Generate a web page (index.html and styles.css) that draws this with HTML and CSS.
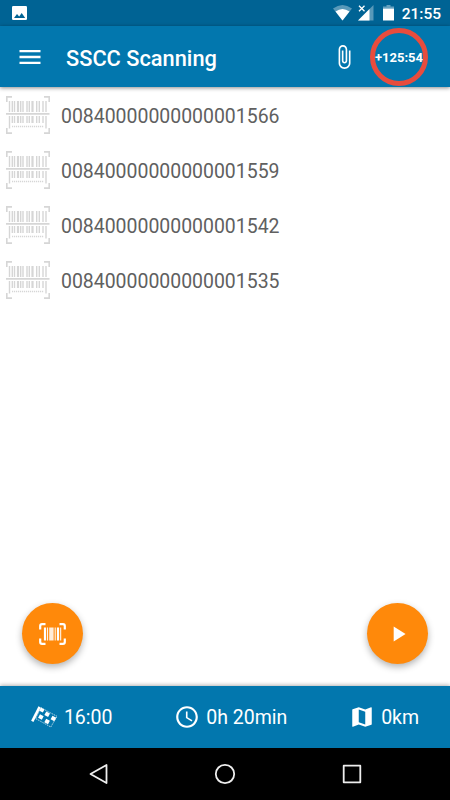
FILE: index.html
```html
<!DOCTYPE html>
<html lang="en">

<head>
    <meta charset="UTF-8">
    <meta name="viewport" content="width=device-width, initial-scale=1.0">
    <title>SSCC Scanning</title>
    <link rel="stylesheet" href="styles.css">
</head>

<body>
    <svg class="defs" width="0" height="0">
        <symbol id="barcode" viewBox="0 0 44 38">
            <path d="M.8 6V.9H6M38 .9h5.200V6M.8 32v5.100H6M38 37.100h5.200V32" fill="none" stroke="#d6d6d6" stroke-width="1.600" />
            <path d="M0 17.900h43.500" stroke="#d6d6d6" stroke-width="1.700" />
            <path d="M3.500 5v11M3.500 20v12.500M40 5v11M40 20v12.500M6.300 5v11M6.300 20v7M8.500 5v11M8.500 20v7M14.700 5v11M14.700 20v7M17 5v11M17 20v7M21 5v11M21 20v7M23.300 5v11M23.300 20v7M30.700 5v11M30.700 20v7M33.300 5v11M33.300 20v7M37 5v11M37 20v7" stroke="#d6d6d6" stroke-width="1.400" />
            <path d="M12 5v11M12 20v7M26.500 5v11M26.500 20v7" stroke="#d6d6d6" stroke-width="2.200" />
            <path d="M6 30.500h32" stroke="#d6d6d6" stroke-width="1.500" stroke-dasharray="1.200 .8" />
        </symbol>
    </svg>

    <div class="page-wrapper">
        <div class="status-bar">
            <svg class="picture" width="15" height="14" viewBox="0 0 15 14">
                <rect width="15" height="14" rx="1.300" fill="#fff" />
                <path d="M2 12l3-4 2.200 2.400L9.700 7l3.500 5z" fill="#006394" />
            </svg>
            <div class="status-right">
                <svg class="wifi" width="19" height="16" viewBox="0 0 19 16">
                    <path d="M0 3.500Q9.500-3.500 19 3.500L9.500 15.500z" fill="#fff" opacity=".35" />
                    <path d="M2.500 6.500Q9.500 1.500 16.500 6.500L9.500 15.500z" fill="#fff" />
                </svg>
                <svg class="signal" width="16" height="16" viewBox="0 0 16 16">
                    <path d="M15.500 0v15.500H0z" fill="#fff" opacity=".35" />
                    <path d="M11.500 4v11.500H0z" fill="#fff" />
                    <path d="M0 0h7.500v7L4 9.500 0 7z" fill="#006394" />
                    <path d="M1 .8l5.500 5.500M6.500 .8L1 6.300" stroke="#fff" stroke-width="1.300" />
                </svg>
                <svg class="battery" width="11" height="16" viewBox="0 0 11 16">
                    <path d="M3.500 0h4v1.500H11v2H0v-2h3.500z" fill="#fff" opacity=".4" />
                    <path d="M0 3.500h11v12H0z" fill="#fff" />
                </svg>
                <span class="clock">21:55</span>
            </div>
        </div>

        <div class="app-bar">
            <svg class="menu" width="28" height="28" viewBox="0 0 24 24">
                <path d="M3 18h18v-2H3v2zm0-5h18v-2H3v2zm0-7v2h18V6H3z" fill="#fff" />
            </svg>
            <div class="title">SSCC Scanning</div>
            <svg class="attach" width="26" height="26" viewBox="0 0 24 24">
                <path d="M16.500 6v11.500c0 2.210-1.790 4-4 4s-4-1.790-4-4V5c0-1.380 1.120-2.500 2.500-2.500s2.500 1.120 2.500 2.500v10.500c0 .55-.45 1-1 1s-1-.45-1-1V6H10v9.500c0 1.380 1.120 2.500 2.500 2.500s2.500-1.120 2.500-2.500V5c0-2.210-1.790-4-4-4S7 2.790 7 5v12.500c0 3.040 2.460 5.500 5.500 5.500s5.500-2.460 5.500-5.500V6h-1.500z" fill="#fff" />
            </svg>
            <div class="timer">+125:54</div>
        </div>

        <div class="content">
            <div class="row"><svg width="44" height="38"><use href="#barcode" /></svg><span>00840000000000001566</span></div>
            <div class="row"><svg width="44" height="38"><use href="#barcode" /></svg><span>00840000000000001559</span></div>
            <div class="row"><svg width="44" height="38"><use href="#barcode" /></svg><span>00840000000000001542</span></div>
            <div class="row"><svg width="44" height="38"><use href="#barcode" /></svg><span>00840000000000001535</span></div>

            <div class="actions">
                <div class="fab">
                    <svg width="27" height="22" viewBox="0 0 27 22">
                        <path d="M1.200 6.500V3q0-1.800 1.800-1.800h3.500M20.500 1.200H24q1.800 0 1.800 1.800v3.500M1.200 15.500V19q0 1.800 1.800 1.800h3.500M20.500 20.800H24q1.800 0 1.800-1.800v-3.500" fill="none" stroke="#fff" stroke-width="2.200" />
                        <path d="M6 4.500v13M19 4.500v13" stroke="#fff" stroke-width="2.200" />
                        <path d="M8.600 4.500v13M16.200 4.500v13M21.700 4.500v13" stroke="#fff" stroke-width="1" />
                        <path d="M12.400 4.500v13" stroke="#fff" stroke-width="4.400" opacity=".85" />
                    </svg>
                </div>
                <div class="fab">
                    <svg width="26" height="26" viewBox="0 0 24 24">
                        <path d="M8 5v14l11-7z" fill="#fff" />
                    </svg>
                </div>
            </div>
        </div>

        <div class="bottom-bar">
            <div class="info">
                <svg width="27" height="22" viewBox="0 0 27 22">
                    <path d="M8.600 .8L1.300 15.300" stroke="#fff" stroke-width="2.600" />
                    <path d="M10 1.800l16 8.500-6.200 10.700L4.500 12.500z" fill="none" stroke="#fff" stroke-width=".7" stroke-dasharray="1.300 .8" />
                    <path d="M10 1.500l3.500 1.900-1.700 3.100-3.400-1.700zM15.300 5.500l3.700 2-1.900 3.500-3.700-2zM9 8.300l3.700 2-1.900 3.500-3.700-2zM21.500 9.800l3.700 2-1.900 3.500-3.700-2zM15.200 12.700l3.700 2-1.900 3.500-3.700-2z" fill="#fff" />
                </svg>
                <span class="arrival">16:00</span>
            </div>
            <div class="info">
                <svg width="26" height="26" viewBox="0 0 24 24">
                    <path d="M11.990 2C6.470 2 2 6.480 2 12s4.470 10 9.990 10C17.520 22 22 17.520 22 12S17.520 2 11.990 2zM12 20c-4.420 0-8-3.580-8-8s3.580-8 8-8 8 3.580 8 8-3.580 8-8 8zm.5-13H11v6l5.250 3.150.75-1.230-4.500-2.670z" fill="#fff" />
                </svg>
                <span>0h 20min</span>
            </div>
            <div class="info">
                <svg width="26" height="26" viewBox="0 0 24 24">
                    <path d="M20.500 3l-.16.03L15 5.100 9 3 3.360 4.900c-.21.07-.36.25-.36.48V20.500c0 .28.22.5.5.5l.16-.03L9 18.900l6 2.100 5.640-1.900c.21-.07.36-.25.36-.48V3.500c0-.28-.22-.5-.5-.5zM15 19l-6-2.110V5l6 2.110V19z" fill="#fff" />
                </svg>
                <span>0km</span>
            </div>
        </div>

        <div class="nav-bar">
            <svg width="22" height="22" viewBox="0 0 22 22">
                <path d="M18.500 2v18L2.500 11z" />
            </svg>
            <svg width="22" height="22" viewBox="0 0 22 22">
                <circle cx="11" cy="11" r="9.200" />
            </svg>
            <svg width="22" height="22" viewBox="0 0 22 22">
                <rect x="2.700" y="2.700" width="16.600" height="16.600" />
            </svg>
        </div>
    </div>
</body>

</html>
```
FILE: styles.css
```css
html,
body {
    margin: 0;
    font-family: Roboto, sans-serif;
    overflow: hidden;
}

svg {
    display: block;
    flex: none;
}

.defs {
    position: absolute;
}

.page-wrapper {
    width: 100vw;
    height: 100vh;
    display: flex;
    flex-direction: column;
    background-color: white;
}

.status-bar {
    height: 26px;
    box-sizing: border-box;
    padding: 0 9px 0 12px;
    display: flex;
    align-items: center;
    justify-content: space-between;
    background-color: #006394;
}

.status-right {
    display: flex;
    align-items: center;
}

.signal {
    margin-left: 6px;
}

.battery {
    margin-left: 9px;
}

.clock {
    margin-left: 8px;
    padding-top: 2px;
    font-size: 15.5px;
    font-weight: 500;
    line-height: 24px;
    color: white;
}

.app-bar {
    height: 61px;
    box-sizing: border-box;
    padding: 0 22px 0 17px;
    display: flex;
    align-items: center;
    background-color: #0277ae;
    box-shadow: 0 1px 4px rgba(0, 0, 0, 0.45);
    color: white;
    z-index: 1;
}

.menu {
    margin-left: -1px;
}

.title {
    flex: 1;
    margin-left: 22px;
    padding-top: 3px;
    font-size: 21.8px;
    font-weight: 500;
}

.attach {
    margin-right: 13px;
}

.timer {
    width: 58px;
    height: 58px;
    box-sizing: border-box;
    border: 5.5px solid #e84c3d;
    border-radius: 50%;
    display: flex;
    align-items: center;
    justify-content: center;
    padding-top: 1px;
    font-size: 13px;
    font-weight: 700;
}

.content {
    flex: 1;
    display: flex;
    flex-direction: column;
}

.row {
    height: 55px;
    padding-left: 6px;
    display: flex;
    align-items: center;
    gap: 11px;
    font-size: 19.45px;
    color: #606060;
}

.row span {
    padding-top: 3px;
}

.actions {
    margin-top: auto;
    padding: 0 22px;
    margin-bottom: 22px;
    display: flex;
    justify-content: space-between;
}

.fab {
    width: 61px;
    height: 61px;
    border-radius: 50%;
    display: flex;
    align-items: center;
    justify-content: center;
    background-color: #ff890a;
    box-shadow: 0 3px 7px rgba(0, 0, 0, 0.3);
}

.bottom-bar {
    height: 62px;
    display: flex;
    align-items: center;
    justify-content: space-around;
    background-color: #0277ae;
    box-shadow: 0 -1px 4px rgba(0, 0, 0, 0.3);
}

.info {
    display: flex;
    align-items: center;
    gap: 6px;
    font-size: 19.5px;
    color: white;
}

.info span {
    padding-top: 1px;
}

.nav-bar {
    height: 52px;
    display: flex;
    align-items: center;
    justify-content: center;
    gap: 104.5px;
    background-color: black;
}

.nav-bar path,
.nav-bar circle,
.nav-bar rect {
    fill: none;
    stroke: #eeeeee;
    stroke-width: 1.8;
    stroke-linejoin: round;
}
```
